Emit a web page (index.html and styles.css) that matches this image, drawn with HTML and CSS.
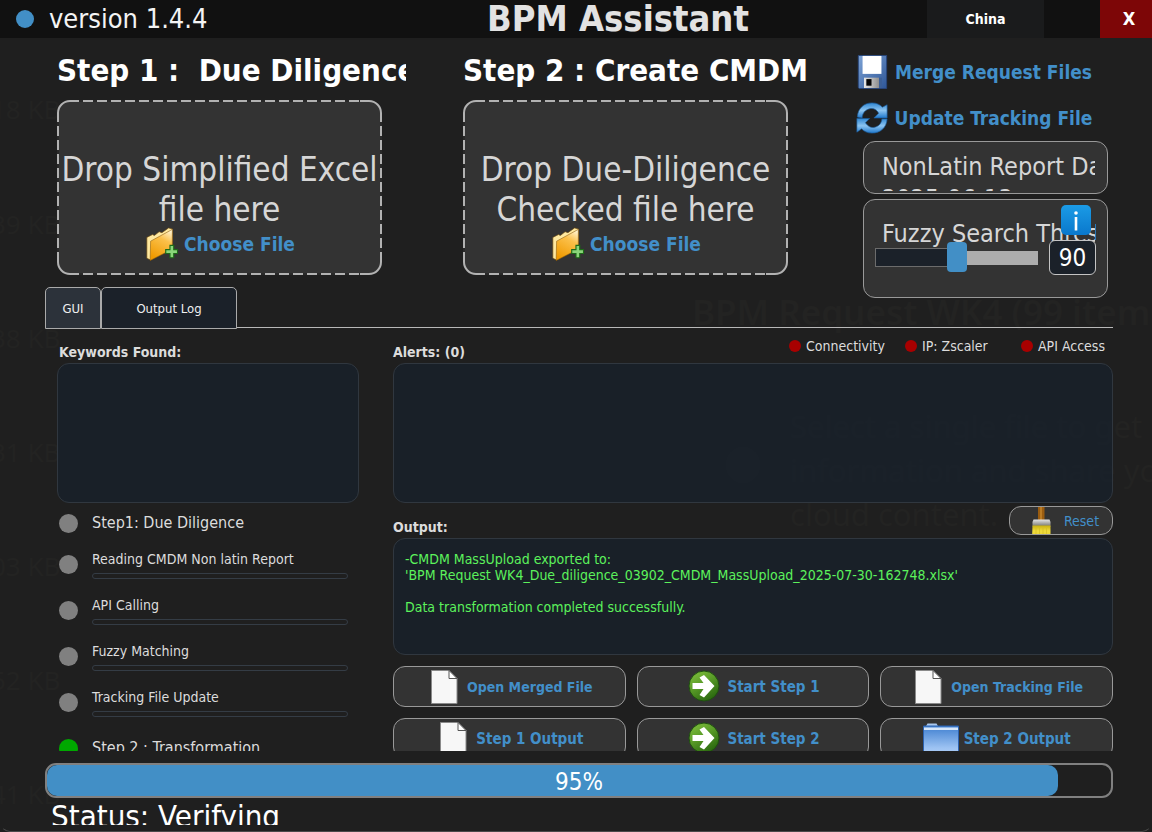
FILE: index.html
```html
<!DOCTYPE html>
<html lang="en">
<head>
<meta charset="utf-8">
<title>BPM Assistant</title>
<link rel="stylesheet" href="styles.css">
</head>
<body>
<svg class="defs" aria-hidden="true">
  <defs>
    <linearGradient id="gFolder" x1="0.8" y1="0" x2="0.4" y2="1"><stop offset="0" stop-color="#fff3d0"/><stop offset=".35" stop-color="#fbc04a"/><stop offset="1" stop-color="#f09a00"/></linearGradient>
    <linearGradient id="gSync" x1="0" y1="0" x2="0" y2="1"><stop offset="0" stop-color="#2f86d2"/><stop offset=".5" stop-color="#8cc4f0"/><stop offset="1" stop-color="#1f78cc"/></linearGradient>
    <linearGradient id="gDisk" x1="0" y1="0" x2="1" y2="1"><stop offset="0" stop-color="#7da3d6"/><stop offset="1" stop-color="#2d5596"/></linearGradient>
    <linearGradient id="gShutter" x1="0" y1="0" x2="1" y2="0"><stop offset="0" stop-color="#e8e8e8"/><stop offset="1" stop-color="#8e8e8e"/></linearGradient>
    <linearGradient id="gGo" x1="0" y1="0" x2=".6" y2="1"><stop offset="0" stop-color="#86c440"/><stop offset=".5" stop-color="#5a9c28"/><stop offset="1" stop-color="#2c6a10"/></linearGradient>
    <linearGradient id="gBlue" x1="0" y1="0" x2="0" y2="1"><stop offset="0" stop-color="#3f7fd0"/><stop offset=".7" stop-color="#9cc2f2"/><stop offset="1" stop-color="#b4d2f8"/></linearGradient>
    <linearGradient id="gInfo" x1="0" y1="0" x2="0" y2="1"><stop offset="0" stop-color="#1b9be6"/><stop offset="1" stop-color="#0a78cc"/></linearGradient>
    <linearGradient id="gFerrule" x1="0" y1="0" x2="0" y2="1"><stop offset="0" stop-color="#e6e6e6"/><stop offset="1" stop-color="#6a6a62"/></linearGradient>
    <linearGradient id="gBristle" x1="0" y1="0" x2="0" y2="1"><stop offset="0" stop-color="#c8b010"/><stop offset=".4" stop-color="#f0dc3c"/><stop offset="1" stop-color="#e6d030"/></linearGradient>
  </defs>
  <symbol id="i-disk" viewBox="0 0 36 36">
    <path d="M3.500 .5h30v35h-29l-1-1z" fill="url(#gDisk)" stroke="#27457a"/>
    <path d="M8 1h20v19H8z" fill="#fff"/>
    <path d="M9.500 24h16v11h-16z" fill="url(#gShutter)"/>
    <path d="M12 25.500h5.500v7H12z" fill="#050505"/>
    <path d="M25.500 24h3v11h-3z" fill="#3c5f96"/>
  </symbol>
  <symbol id="i-sync" viewBox="0 0 36 36">
    <path d="M2.500 17C3 8 9 2 18 2c5 0 8.500 1.800 11 4.500L34 4v14H20l5-5C23.500 9.500 20 7.500 16.500 8 10.500 9 8 13 7.500 18z" fill="url(#gSync)" stroke="#1c5c9c" stroke-width=".7"/>
    <path d="M34 19c-.5 9-7 15-16 15-5 0-8.500-1.800-11-4.500L2 33V18.500h13.500l-4.500 4.500c2.500 3.500 5.500 5.500 9 5 5.500-1 8-4.500 8.500-9z" fill="url(#gSync)" stroke="#1c5c9c" stroke-width=".7"/>
  </symbol>
  <symbol id="i-folder-add" viewBox="0 0 36 36">
    <path d="M3 11l6-3 2 1 5-4 3 1 7-5 4 1v20L7 35l-4-2z" fill="#ffe9a0" stroke="#6e4a10" stroke-width=".7"/>
    <path d="M7 15L30 2.500v21L6.500 35.500z" fill="url(#gFolder)" stroke="#8a5808" stroke-width=".6"/>
    <path d="M27.500 19.500h4v4.500H35.500v4h-4v4.500h-4V28H23v-4h4.500z" fill="#8ad67a" stroke="#1d6a18" stroke-width="1.200"/>
  </symbol>
  <symbol id="i-doc" viewBox="0 0 36 36">
    <path d="M5.500 1.500h17.500l8 8v25H5.500z" fill="#f7f7f7" stroke="#8a8a8a"/>
    <path d="M23 1.500v8h8z" fill="#fff" stroke="#555"/>
  </symbol>
  <symbol id="i-go" viewBox="0 0 36 36">
    <circle cx="18" cy="17" r="15" fill="url(#gGo)" stroke="#1f5010"/>
    <path d="M6.500 14h11l-4-5.500 4.500-2.500L28.500 17 18 28.500l-4.500-2.500 4-6H6.500z" fill="#fff"/>
  </symbol>
  <symbol id="i-folder" viewBox="0 0 36 36">
    <path d="M3 5l1.500-2.500h9L15 5z" fill="#a9c8ee"/>
    <path d="M.5 5h35v31H.5z" fill="url(#gBlue)" stroke="#2c62b0"/>
    <path d="M1 6.500h34v2.500H1z" fill="#d6e6fa"/>
  </symbol>
  <symbol id="i-brush" viewBox="0 0 36 36">
    <path d="M15 0h6.500v18H15z" fill="#9a5c10"/>
    <path d="M17 0h2v18h-2z" fill="#b97a24"/>
    <path d="M9.500 19l1-2.500h16l1 2.500v5h-18z" fill="url(#gFerrule)"/>
    <path d="M9.500 22.500h18V36H9z" fill="url(#gBristle)"/>
    <path d="M13 25v11M16.500 25v11M20 25v11M23.500 25v11" stroke="#d2ba20" stroke-width=".6"/>
  </symbol>
  <symbol id="i-info" viewBox="0 0 30 30">
    <rect width="30" height="30" rx="5" fill="url(#gInfo)"/>
    <circle cx="15" cy="8" r="1.800" fill="#fff"/>
    <path d="M13.700 12h2.600v13.500h-2.600z" fill="#fff"/>
  </symbol>
</svg>

<div class="window">
  <div class="backdrop" aria-hidden="true">
    <span class="ghost size g0">31 KB</span>
    <span class="ghost size g1">18 KB</span>
    <span class="ghost size g2">39 KB</span>
    <span class="ghost size g3">38 KB</span>
    <span class="ghost size g4">31 KB</span>
    <span class="ghost size g5">03 KB</span>
    <span class="ghost size g6">52 KB</span>
    <span class="ghost size g7">41 KB</span>
    <span class="ghost head-line">BPM Request WK4 (99 item</span>
    <span class="ghost note">Select a single file to get<br>information and share yo<br>cloud content.</span>
    <span class="ghost bullet"></span>
  </div>

  <header class="titlebar">
    <div class="version"><span class="version-dot"></span>version 1.4.4</div>
    <h1>BPM Assistant</h1>
    <div class="title-actions">
      <button class="region" type="button">China</button>
      <button class="close" type="button" aria-label="Close">X</button>
    </div>
  </header>

  <main class="main">
    <section class="top">
      <div class="step">
        <h2>Step 1 :&nbsp; Due Diligence</h2>
        <div class="drop">
          <p>Drop Simplified Excel file here</p>
          <button class="link-btn" type="button"><svg class="icon"><use href="#i-folder-add"/></svg>Choose File</button>
        </div>
      </div>
      <div class="step">
        <h2>Step 2 : Create CMDM</h2>
        <div class="drop">
          <p>Drop Due-Diligence Checked file here</p>
          <button class="link-btn" type="button"><svg class="icon"><use href="#i-folder-add"/></svg>Choose File</button>
        </div>
      </div>
      <aside class="side">
        <button class="link-btn merge" type="button"><svg class="icon"><use href="#i-disk"/></svg>Merge Request Files</button>
        <button class="link-btn" type="button"><svg class="icon"><use href="#i-sync"/></svg>Update Tracking File</button>
        <div class="panel report"><div class="report-text">NonLatin Report Date:<br>2025-06-13</div></div>
        <div class="panel fuzzy">
          <label class="fuzzy-label" for="threshold">Fuzzy Search Threshold</label>
          <button class="info" type="button" aria-label="About the threshold"><svg><use href="#i-info"/></svg></button>
          <div class="fuzzy-row">
            <input id="threshold" class="slider" type="range" min="80" max="100" value="90">
            <input class="value" type="text" value="90" aria-label="Threshold value">
          </div>
        </div>
      </aside>
    </section>

    <nav class="tabs" role="tablist">
      <button class="tab active" type="button" role="tab" aria-selected="true">GUI</button>
      <button class="tab log" type="button" role="tab" aria-selected="false">Output Log</button>
    </nav>

    <section class="page">
      <div class="left">
        <div class="head"><label for="keywords">Keywords Found:</label></div>
        <textarea id="keywords" class="box tall" readonly></textarea>
        <ul class="tasks">
          <li class="task title"><span class="dot"></span><span class="task-name">Step1: Due Diligence</span></li>
          <li class="task"><span class="dot"></span><div><span class="task-name">Reading CMDM Non latin Report</span><div class="bar"></div></div></li>
          <li class="task"><span class="dot"></span><div><span class="task-name">API Calling</span><div class="bar"></div></div></li>
          <li class="task"><span class="dot"></span><div><span class="task-name">Fuzzy Matching</span><div class="bar"></div></div></li>
          <li class="task"><span class="dot"></span><div><span class="task-name">Tracking File Update</span><div class="bar"></div></div></li>
          <li class="task title second"><span class="dot done"></span><span class="task-name">Step 2 : Transformation</span></li>
        </ul>
      </div>
      <div class="right">
        <div class="head">
          <label for="alerts">Alerts: (0)</label>
          <ul class="states">
            <li><span class="led"></span>Connectivity</li>
            <li><span class="led"></span>IP: Zscaler</li>
            <li><span class="led"></span>API Access</li>
          </ul>
        </div>
        <textarea id="alerts" class="box tall" readonly></textarea>
        <div class="head output-head">
          <label for="output">Output:</label>
          <button class="action reset" type="button"><svg class="icon"><use href="#i-brush"/></svg>Reset</button>
        </div>
        <textarea id="output" class="box output" readonly>-CMDM MassUpload exported to:
'BPM Request WK4_Due_diligence_03902_CMDM_MassUpload_2025-07-30-162748.xlsx'

Data transformation completed successfully.</textarea>
        <div class="actions">
          <button class="action open" type="button"><svg class="icon"><use href="#i-doc"/></svg>Open Merged File</button>
          <button class="action" type="button"><svg class="icon"><use href="#i-go"/></svg>Start Step 1</button>
          <button class="action open" type="button"><svg class="icon"><use href="#i-doc"/></svg>Open Tracking File</button>
          <button class="action" type="button"><svg class="icon"><use href="#i-doc"/></svg>Step 1 Output</button>
          <button class="action" type="button"><svg class="icon"><use href="#i-go"/></svg>Start Step 2</button>
          <button class="action" type="button"><svg class="icon"><use href="#i-folder"/></svg>Step 2 Output</button>
        </div>
      </div>
    </section>

    <div class="progress" role="progressbar" aria-label="Overall progress" aria-valuenow="95" aria-valuemin="0" aria-valuemax="100">
      <div class="fill" style="width:95%"></div>
      <span class="percent">95%</span>
    </div>
    <div class="status">Status: Verifying</div>
  </main>
</div>
</body>
</html>
```

FILE: styles.css
```css
* { box-sizing: border-box; }

body {
  margin: 0;
  background: #1f1f1f;
  color: #dcdcdc;
  font-family: "DejaVu Sans Condensed", "DejaVu Sans", "Noto Sans", sans-serif;
  font-size: 14px;
}

h1, h2, p, ul { margin: 0; padding: 0; }
ul { list-style: none; }
button, input, textarea { font: inherit; color: inherit; margin: 0; }
button { cursor: pointer; }
.defs { position: absolute; width: 0; height: 0; }

.window {
  position: relative;
  height: 100vh;
  display: flex;
  flex-direction: column;
  overflow: hidden;
  background: #1f1f1f;
}
.window::after {
  content: "";
  position: absolute;
  inset: 0;
  border: 1px solid transparent;
  border-bottom-color: #4a4a4a;
  border-radius: 10px;
  pointer-events: none;
}

/* Faint desktop content seen through the translucent window */
.backdrop { position: absolute; inset: 0; overflow: hidden; pointer-events: none; }
.ghost { position: absolute; color: #232322; white-space: nowrap; font-family: "Noto Sans", sans-serif; }
.ghost.size { left: -9px; font-size: 26px; line-height: 30px; }
.g0 { top: -12px; }
.g1 { top: 94px; }
.g2 { top: 209px; }
.g3 { top: 323px; }
.g4 { top: 437px; }
.g5 { top: 551px; }
.g6 { top: 665px; }
.g7 { top: 779px; }
.ghost.head-line { left: 692px; top: 290px; font-size: 35px; line-height: 44px; font-weight: 600; }
.ghost.note { left: 790px; top: 404px; font-size: 31px; line-height: 44px; }
.ghost.bullet { left: 726px; top: 447px; width: 34px; height: 36px; border-radius: 50%; background: #232323; }

.titlebar {
  position: relative;
  flex: none;
  height: 38px;
  display: grid;
  grid-template-columns: 1fr auto 1fr;
  align-items: center;
  background: #111;
}
.version {
  display: flex;
  align-items: center;
  gap: 15px;
  padding-left: 16px;
  color: #f4f4f4;
  font-size: 27px;
  line-height: 38px;
}
.version-dot { width: 18px; height: 18px; border-radius: 50%; background: #428fc6; }
.titlebar h1 { padding-left: 84px; color: #e2e2e2; font-size: 36px; line-height: 36px; }
.title-actions { display: flex; justify-content: flex-end; gap: 56px; height: 38px; }
.region, .close { border: 0; font-weight: bold; color: #fff; }
.region { width: 117px; background: #1a1b1c; font-size: 14px; }
.close { width: 52px; padding: 0 0 2px 6px; background: #7d0607; font-size: 18px; }

.main {
  position: relative;
  flex: 1;
  min-height: 0;
  display: flex;
  flex-direction: column;
  padding: 0 39px 7px 45px;
}

.top {
  flex: none;
  display: grid;
  grid-template-columns: minmax(0, 325fr) minmax(0, 325fr) minmax(0, 239fr);
  column-gap: 81px;
  padding: 10px 5px 0 12px;
  height: 249px;
}
.top .side { margin-left: -30px; }
.step { min-width: 0; }
.step h2 {
  width: 349px;
  overflow: hidden;
  white-space: nowrap;
  color: #fff;
  font-size: 31px;
  line-height: 44px;
  height: 52px;
}
.drop {
  position: relative;
  height: 175px;
  padding-top: 48px;
  border: 2px solid #b2b2b2;
  border-radius: 13px;
  background: #333;
  text-align: center;
}
/* gaps laid over the solid border turn its straight runs into dashes */
.drop::before, .drop::after { content: ""; position: absolute; pointer-events: none; }
.drop::before {
  inset: -2px 20px;
  background:
    repeating-linear-gradient(90deg, #292929 0 4px, transparent 4px 14px) top / 100% 2px no-repeat,
    repeating-linear-gradient(90deg, #292929 0 4px, transparent 4px 14px) bottom / 100% 2px no-repeat;
}
.drop::after {
  inset: 20px -2px;
  background:
    repeating-linear-gradient(#292929 0 4px, transparent 4px 14px) left / 2px 100% no-repeat,
    repeating-linear-gradient(#292929 0 4px, transparent 4px 14px) right / 2px 100% no-repeat;
}
.drop p { color: #d6d6d6; font-size: 33px; line-height: 40px; }

.icon { width: 36px; height: 36px; flex: none; }
.link-btn {
  display: inline-flex;
  align-items: center;
  justify-content: center;
  gap: 6px;
  padding: 0;
  border: 0;
  background: none;
  color: #428fc9;
  font-weight: bold;
  font-size: 19px;
  line-height: 36px;
  white-space: nowrap;
}
.drop .link-btn { height: 28px; }
.drop .icon, .side .icon { width: 34px; height: 36px; }

.side { display: flex; flex-direction: column; }
.side .link-btn { height: 46px; }
.side .link-btn.merge { height: 47px; }
.panel {
  margin-left: 24px;
  border: 1px solid #999;
  border-radius: 12px;
  background: #333;
  color: #d6d6d6;
  font-size: 25px;
}
.report { height: 53px; padding: 9px 12px 2px 18px; }
.report-text { height: 40px; overflow: hidden; white-space: nowrap; line-height: 32px; }
.fuzzy { position: relative; height: 99px; margin-top: 5px; padding: 24px 11px 0 11px; }
.fuzzy-label {
  display: block;
  margin-left: 7px;
  height: 16px;
  line-height: 20px;
  overflow-x: clip;
  white-space: nowrap;
  border-right: 1px solid #2b78b8;
}
.info { position: absolute; top: 5px; right: 16px; width: 30px; height: 30px; padding: 0; border: 0; background: none; }
.info svg { display: block; width: 30px; height: 30px; }
.fuzzy-row { position: relative; display: flex; align-items: center; gap: 11px; }
.slider {
  -webkit-appearance: none;
  appearance: none;
  flex: 1;
  min-width: 0;
  height: 30px;
  background: none;
}
.slider::-webkit-slider-runnable-track {
  height: 20px;
  background:
    linear-gradient(#1b2129, #1b2129) 1px 1px / 50% 17px no-repeat,
    linear-gradient(#6c6c6c, #6c6c6c) 0 0 / 50% 19px no-repeat,
    linear-gradient(#adadad, #adadad) right 3px / 50% 14px no-repeat;
}
.slider::-webkit-slider-thumb {
  -webkit-appearance: none;
  width: 20px;
  height: 30px;
  margin-top: -6px;
  border-radius: 4px;
  background: #428fc6;
}
.value {
  width: 47px;
  height: 35px;
  padding: 0;
  border: 1px solid #c4c4c4;
  border-radius: 6px;
  background: #1b2129;
  color: #fff;
  font-size: 24px;
  text-align: center;
}

.tabs { flex: none; display: flex; height: 42px; position: relative; }
.tabs::before {
  content: "";
  position: absolute;
  left: 192px;
  right: 0;
  bottom: 1px;
  height: 1px;
  background: #b8b8b8;
}
.tab {
  width: 56px;
  padding: 0;
  border: 1px solid #aaa;
  border-radius: 5px 5px 0 0;
  background: #1b2129;
  color: #f0f0f0;
  font-size: 13px;
}
.tab.active { background: #2c323a; }
.tab.log { width: 136px; }

.page {
  flex: 1;
  min-height: 0;
  overflow: hidden;
  display: grid;
  grid-template-columns: 302fr 720fr;
  column-gap: 34px;
  padding-left: 12px;
}
.left, .right { display: flex; flex-direction: column; min-width: 0; }
.head { flex: none; display: flex; justify-content: space-between; height: 34px; }
.head label { align-self: flex-end; padding-left: 2px; font-weight: bold; font-size: 14px; line-height: 22px; }
.right .head label { padding-left: 0; }
.states { display: flex; align-items: center; padding-right: 8px; }
.states li { display: flex; align-items: center; gap: 5px; min-width: 116px; line-height: 34px; white-space: nowrap; }
.states li:last-child { min-width: 0; }
.led { width: 12px; height: 12px; border-radius: 50%; background: #a80000; }

.box {
  display: block;
  width: 100%;
  flex: none;
  resize: none;
  outline: 0;
  border: 1px solid #30373f;
  border-radius: 12px;
  background: rgba(24, 34, 44, .75);
}
.tall { height: 140px; }
.output-head { height: 35px; padding-top: 3px; }
.output-head label { line-height: 22px; }
.output { height: 117px; padding: 12px 11px; color: #5cf25c; font-size: 14px; line-height: 16px; overflow: hidden; }

.tasks { display: flex; flex-direction: column; gap: 16px; padding: 10px 11px 0 2px; }
.task { flex: none; display: grid; grid-template-columns: 19px 1fr; column-gap: 14px; align-items: center; height: 30px; }
.task-name { display: block; line-height: 20px; white-space: nowrap; }
.task.title { height: 20px; font-size: 16px; }
.task.second { margin-top: 5px; }
.dot { width: 19px; height: 19px; border-radius: 50%; background: #808080; }
.dot.done { background: #00a800; }
.bar { height: 6px; margin-top: 4px; border: 1px solid #343c45; border-radius: 3px; }

.actions { display: grid; grid-template-columns: repeat(3, 1fr); gap: 11px; padding-top: 11px; }
.action {
  display: flex;
  align-items: center;
  justify-content: center;
  gap: 5px;
  height: 41px;
  padding: 0;
  overflow: hidden;
  border: 1px solid #999;
  border-radius: 12px;
  background: #333;
  color: #428fc9;
  font-weight: bold;
  font-size: 15px;
  white-space: nowrap;
}
.action.open { font-size: 14px; }
.action.reset { width: 104px; height: 29px; font-weight: normal; font-size: 14px; }

.progress {
  position: relative;
  flex: none;
  height: 35px;
  margin-top: 12px;
  border: 2px solid #808080;
  border-radius: 11px;
}
.fill { height: 100%; border-radius: 10px; background: #428fc6; }
.percent { position: absolute; inset: 0; text-align: center; color: #fff; font-size: 24px; line-height: 35px; }
.status { flex: none; height: 27px; padding-left: 6px; overflow: hidden; color: #fff; font-size: 31px; line-height: 36px; }
```
